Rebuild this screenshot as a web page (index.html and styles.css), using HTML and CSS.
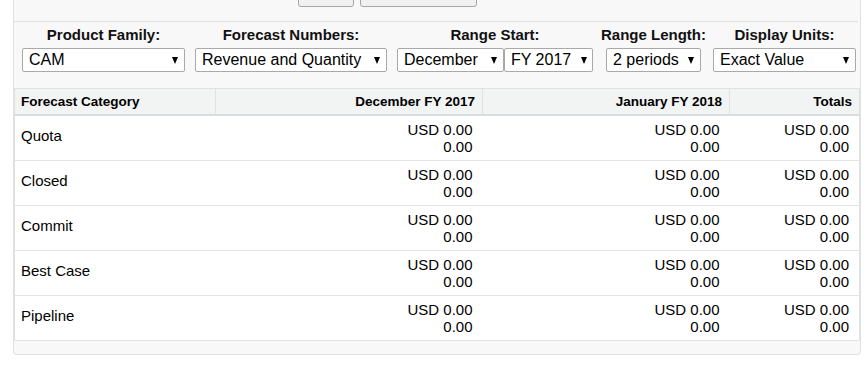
FILE: index.html
```html
<!DOCTYPE html>
<html lang="en">
  <head>
    <meta charset="UTF-8" />
    <title>Forecasts</title>
    <link rel="stylesheet" href="styles.css">
  </head>
  <body>
    <div class="panel">
      <div class="toolbar">
        <button class="btn btn-edit">Edit</button>
        <button class="btn btn-history">Forecast History</button>
      </div>

      <div class="filters">
        <div class="filter filter-family">
          <label>Product Family:</label>
          <div class="select w-family"><span>CAM</span><i class="caret"></i></div>
        </div>
        <div class="filter filter-numbers">
          <label>Forecast Numbers:</label>
          <div class="select w-numbers"><span>Revenue and Quantity</span><i class="caret"></i></div>
        </div>
        <div class="filter filter-start">
          <label>Range Start:</label>
          <div class="pair">
            <div class="select w-month"><span>December</span><i class="caret"></i></div>
            <div class="select w-year"><span>FY 2017</span><i class="caret"></i></div>
          </div>
        </div>
        <div class="filter filter-length">
          <label>Range Length:</label>
          <div class="select w-length"><span>2 periods</span><i class="caret"></i></div>
        </div>
        <div class="filter filter-units">
          <label>Display Units:</label>
          <div class="select w-units"><span>Exact Value</span><i class="caret"></i></div>
        </div>
      </div>

      <table class="forecast">
        <colgroup>
          <col class="c-cat"><col class="c-dec"><col class="c-jan"><col class="c-tot">
        </colgroup>
        <thead>
          <tr>
            <th class="cat">Forecast Category</th>
            <th>December FY 2017</th>
            <th>January FY 2018</th>
            <th>Totals</th>
          </tr>
        </thead>
        <tbody>
          <tr>
            <td class="cat">Quota</td>
            <td>USD 0.00<br>0.00</td>
            <td>USD 0.00<br>0.00</td>
            <td>USD 0.00<br>0.00</td>
          </tr>
          <tr>
            <td class="cat">Closed</td>
            <td>USD 0.00<br>0.00</td>
            <td>USD 0.00<br>0.00</td>
            <td>USD 0.00<br>0.00</td>
          </tr>
          <tr>
            <td class="cat">Commit</td>
            <td>USD 0.00<br>0.00</td>
            <td>USD 0.00<br>0.00</td>
            <td>USD 0.00<br>0.00</td>
          </tr>
          <tr>
            <td class="cat">Best Case</td>
            <td>USD 0.00<br>0.00</td>
            <td>USD 0.00<br>0.00</td>
            <td>USD 0.00<br>0.00</td>
          </tr>
          <tr>
            <td class="cat">Pipeline</td>
            <td>USD 0.00<br>0.00</td>
            <td>USD 0.00<br>0.00</td>
            <td>USD 0.00<br>0.00</td>
          </tr>
        </tbody>
      </table>
    </div>
  </body>
</html>
```

FILE: styles.css
```css
  :root {
    --panel-bg: #f8f8f8;
    --panel-border: #e0e0e0;
    --line: #e3e3e3;
    --head-bg: #f2f3f3;
    --head-border: #dfe2e3;
    --select-border: #a9a9a9;
    --text: #000;
  }
  * { box-sizing: border-box; margin: 0; padding: 0; }
  html, body { background: #fff; color: var(--text); font-family: "Liberation Sans", Arial, sans-serif; }

  .panel { width: 848px; margin-left: 13px; background: var(--panel-bg); border: 1px solid var(--panel-border); border-top: none; border-radius: 0 0 4px 4px; padding-bottom: 13px; }

  /* toolbar sits mostly above the visible area */
  .toolbar { height: 22px; margin-right: 2px; border-bottom: 1px solid var(--line); display: flex; align-items: flex-start; padding-left: 284px; gap: 6px; }
  .btn { height: 40px; margin-top: -33px; padding-bottom: 26px; border: 1px solid #a5a5a5; border-radius: 3px; background: #f1f1f1; font: bold 12px "Liberation Sans", Arial, sans-serif; color: #333; line-height: 12px; }
  .btn-edit { width: 56px; }
  .btn-history { width: 117px; }

  .filters { display: flex; align-items: flex-start; padding: 4px 0 0 8px; }
  .filter { display: flex; flex-direction: column; align-items: center; }
  .filter label { font-weight: bold; font-size: 15px; line-height: 18px; margin-bottom: 4px; color: #111; white-space: nowrap; }
  .filter-family { width: 163px; }
  .filter-numbers { width: 192px; margin-left: 10px; }
  .filter-start { width: 196px; margin-left: 10px; }
  .filter-length { width: 95px; margin-left: 13px; }
  .filter-units { width: 143px; margin-left: 12px; }
  .pair { display: flex; }

  .select { height: 24px; display: flex; align-items: center; justify-content: space-between; padding: 0 6px 0 6px; background: #fff; border: 1px solid var(--select-border); border-radius: 2px; font-size: 16px; line-height: 22px; white-space: nowrap; }
  .caret { width: 0; height: 0; border-left: 3px solid transparent; border-right: 3px solid transparent; border-top: 7px solid #000; margin-top: 1px; }
  .w-family { width: 163px; }
  .w-numbers { width: 192px; }
  .w-month { width: 107px; }
  .w-year { width: 89px; padding-right: 5px; }
  .w-length { width: 95px; }
  .w-units { width: 143px; }

  .forecast { margin-top: 16px; width: 845px; table-layout: fixed; border-collapse: collapse; background: #fff; border: 1px solid var(--head-border); }
  .c-cat { width: 201px; }
  .c-dec { width: 267px; }
  .c-jan { width: 247px; }
  .c-tot { width: 130px; }
  .forecast th { height: 26px; background: var(--head-bg); border: 1px solid var(--head-border); border-bottom: 2px solid #dadddf; font-size: 13.5px; font-weight: bold; text-align: right; padding: 0 7px 0 6px; white-space: nowrap; }
  .forecast th.cat { text-align: left; }
  .forecast td { font-size: 15px; line-height: 17px; text-align: right; padding: 5px 10px 5px 6px; border-bottom: 1px solid var(--line); height: 45px; vertical-align: middle; }
  .forecast td.cat { text-align: left; padding: 3px 6px 7px; }
```
